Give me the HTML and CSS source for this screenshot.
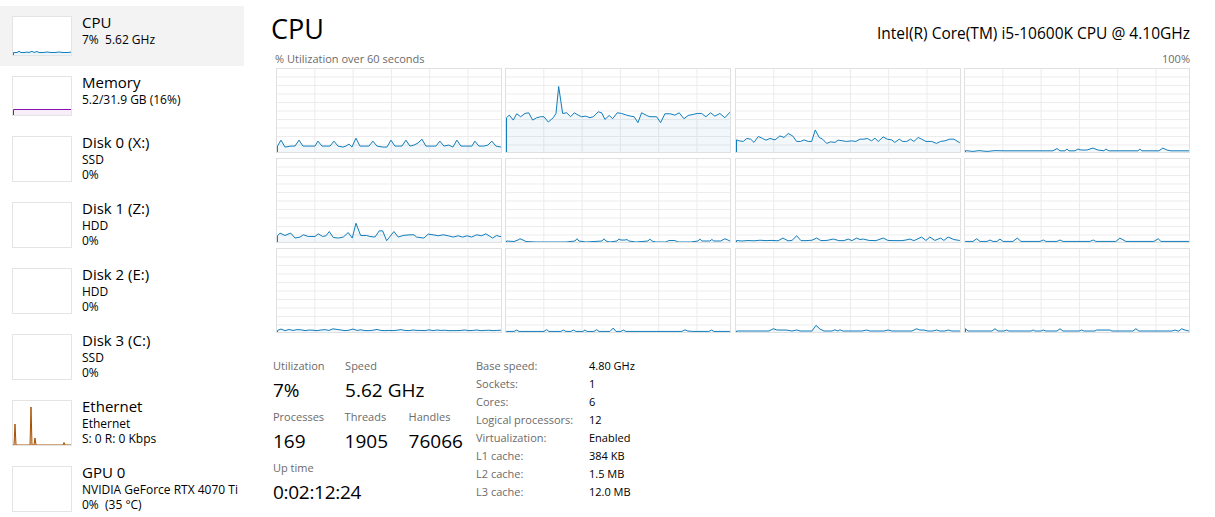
FILE: index.html
```html
<!DOCTYPE html>
<html lang="en">
<head>
<meta charset="utf-8">
<title>Task Manager - CPU</title>
<link rel="stylesheet" href="styles.css">
</head>
<body>
<div class="app">
  <nav class="sidebar">
    <div class="item selected">
      <div class="thumb">
        <svg viewBox="0 0 58 38" preserveAspectRatio="none"><polyline class="tl cpu" points="0.5,38 0.5,35.5 4,35.5 6,34.3 8,35.5 12,35.5 14,35 16,35.5 19,34.3 21,35.5 24,34.5 26,35.5 30,35.5 34,35 38,35.5 42,35.5 46,35 50,35.5 54,35.5 58,35.2 60,35.2 60,40"/></svg>
      </div>
      <div class="info"><div class="name">CPU</div><div class="sub">7%&nbsp; 5.62 GHz</div></div>
    </div>
    <div class="item">
      <div class="thumb">
        <svg viewBox="0 0 58 38" preserveAspectRatio="none"><polyline class="tl mem" points="0.5,38 0.5,32.5 58,32.5 60,32.5 60,40"/></svg>
      </div>
      <div class="info"><div class="name">Memory</div><div class="sub">5.2/31.9 GB (16%)</div></div>
    </div>
    <div class="item">
      <div class="thumb tall"></div>
      <div class="info"><div class="name">Disk 0 (X:)</div><div class="sub">SSD</div><div class="sub">0%</div></div>
    </div>
    <div class="item">
      <div class="thumb tall"></div>
      <div class="info"><div class="name">Disk 1 (Z:)</div><div class="sub">HDD</div><div class="sub">0%</div></div>
    </div>
    <div class="item">
      <div class="thumb tall"></div>
      <div class="info"><div class="name">Disk 2 (E:)</div><div class="sub">HDD</div><div class="sub">0%</div></div>
    </div>
    <div class="item">
      <div class="thumb tall"></div>
      <div class="info"><div class="name">Disk 3 (C:)</div><div class="sub">SSD</div><div class="sub">0%</div></div>
    </div>
    <div class="item">
      <div class="thumb tall">
        <svg viewBox="0 0 58 44" preserveAspectRatio="none"><polyline class="tl eth" points="0,44 1,44 2,23 3,44 17,44 18,6 19,44 21,44 22,37 23,44 50,44 51,41.5 52,44 58,44"/></svg>
      </div>
      <div class="info"><div class="name">Ethernet</div><div class="sub">Ethernet</div><div class="sub">S: 0 R: 0 Kbps</div></div>
    </div>
    <div class="item">
      <div class="thumb tall"></div>
      <div class="info"><div class="name">GPU 0</div><div class="sub">NVIDIA GeForce RTX 4070 Ti</div><div class="sub">0%&nbsp; (35 °C)</div></div>
    </div>
  </nav>

  <main class="main">
    <div class="header">
      <h1 class="title">CPU</h1>
      <div class="model">Intel(R) Core(TM) i5-10600K CPU @ 4.10GHz</div>
    </div>
    <div class="axis"><span>% Utilization over 60 seconds</span><span>100%</span></div>

    <div class="graphs">
      <div class="cell"><svg viewBox="0 0 224 84" preserveAspectRatio="none"><polyline class="gl" points="0.5,84 0.5,78 4,72 8,79 14,78 18,78 22,72 26,78 32,78 38,78 41,73 45,78 50,78 53,78 57,73 61,78 66,79 69,78 72,76 75,79 79,70 83,78 88,78 92,78 96,73 100,78 106,79 110,79 114,72 118,78 122,78 125,78 129,72 133,78 137,77 141,75 145,71 149,78 155,78 159,78 163,73 167,78 172,77 176,79 180,72 184,78 190,78 195,78 198,73 202,78 207,78 211,77 215,73 219,78 224,79 226,79 226,86"/></svg></div>
      <div class="cell"><svg viewBox="0 0 224 84" preserveAspectRatio="none"><polyline class="gl" points="0.5,84 0.5,49.3 3.3,46.7 7.3,51.7 10.7,45.3 14.7,48.3 19,45 22.7,44.3 26.7,51.7 30.7,49.3 34.7,48.3 38,48.3 42.3,53.7 47.3,49.3 50,45 52.7,17.7 56.7,45 60.7,44.3 64.7,48.3 68.3,44.3 72.3,46.7 75.7,48.3 79.7,47.7 84,49.3 87.3,48.3 92.3,43.3 95.7,44.3 99,51 103.3,47 106.7,50.3 111.3,44.3 115.7,45 120.7,46.7 124.7,47.7 128.3,48.3 132,54.3 135.7,44.3 140.7,47 144,48.3 150.7,48.3 154.7,54.3 159,45.3 164,45.3 169,46.7 173.3,44.3 178,50.3 182.3,47 187.3,46 191.3,45 195.7,45 200,48.3 204.7,44.3 209,47.7 214,45 219,49.3 224,43.7 226,43.7 226,86"/></svg></div>
      <div class="cell"><svg viewBox="0 0 224 84" preserveAspectRatio="none"><polyline class="gl" points="0.5,84 0.5,71.7 3.3,72.7 7.3,73.3 10.7,70.3 14.7,71 18,74.3 22.3,68.3 26.7,70.3 30,72 34,70.3 39,71.7 44,67.7 48,69.3 52.3,65.3 56.7,67.7 60.7,73.3 64.7,73.3 68,71.7 72.3,73.3 75.7,73.3 79.3,61.7 83.3,69.3 86.7,71 90.7,75.3 94.7,73.7 99,74.3 102.3,72 106.7,72.7 110.7,73.3 115.7,72.7 120,73.3 124,71 128,71 131.3,70.3 135.7,72.7 139,70 142.3,73.3 147.3,68.7 151.3,71 155.7,71.7 159,74.3 163.3,71 166.7,73.3 170.7,73.3 174.7,71 178,73.3 182.3,69.3 185.7,71 190,73.3 195.7,73.3 200.7,75.3 204.7,73.3 209,72.7 214,71 218,71 223.3,74.3 226,74.3 226,86"/></svg></div>
      <div class="cell"><svg viewBox="0 0 224 84" preserveAspectRatio="none"><polyline class="gl" points="0.5,84 0.5,82.6 8,83.4 14,82.6 22,83.4 30,82.6 40,82.8 60,82.8 88,82.8 92,80.5 95,82.8 100,82.8 102,81 104,82.8 110,82.8 113,81 116,82 122,82 128,80 133,82 139,82.8 141,81 144,82.8 173,82.8 175,81 177,82.8 194,82.8 198,80 202,82 206,82.8 224,82.8 226,82.8 226,86"/></svg></div>

      <div class="cell"><svg viewBox="0 0 224 84" preserveAspectRatio="none"><polyline class="gl" points="0.5,84 0.5,77.7 3,75 8,77.4 13.7,75 18,80 23,79 26.3,76.7 31.3,78.4 38,78.4 41.3,75.7 45.7,78.4 49,77.7 52.3,73.4 56.3,79.4 61.3,80 66.3,79 71.3,74.4 75.3,80 79,65 83.7,77.4 89.7,77.4 93,78.4 98,79 102.3,72.7 105.7,72.7 109.7,82.7 117,73.4 121.3,79 126.3,77.4 133,76.7 137,76.7 139.7,79 147,80 151.3,76 156.3,76.7 161.3,77.7 166.3,76.7 171.3,77.7 176.3,79 181.3,77.7 185.7,79 190.3,77.7 194.7,79 199.7,76.7 204.7,77.7 209,75.7 215.7,80 219.7,77.4 223,78.4 226,78.4 226,86"/></svg></div>
      <div class="cell"><svg viewBox="0 0 224 84" preserveAspectRatio="none"><polyline class="gl" points="0.5,84 0.5,83 8,83.5 12,82 14,80.7 17,82 20,83.5 30,84 45,84 60,84 69,83 71,80.7 73,83 80,84 96,83 98,80.7 100,83 104,84 111,83 113,81 115,82 119,82 121,81.5 123,83 130,84 142,83 144,81 146,83 150,84 160,84 163,82.5 169,82.5 172,84 185,84 192,83 194,81 196,83 204,83 206,81.5 208,83 215,83 219,80.7 222,82 224,83 226,83 226,86"/></svg></div>
      <div class="cell"><svg viewBox="0 0 224 84" preserveAspectRatio="none"><polyline class="gl" points="0.5,84 0.5,82.5 6,83 12,82.5 18,82.8 24,82.2 30,82.6 36,82.4 42,82.8 47,80 52,82.8 56,82.4 60.7,77.7 65,82.6 70,82.6 76,82.2 80.7,80 85,82.6 91,82.4 97.3,81 103,82.6 108,82.6 112.3,81 116,82.6 120.7,80 124,81.5 127.3,81 133,82.4 140,82.6 147.3,80 152,82.4 158,82.6 166,82.6 170,82 174,81 178,82.6 185.7,79 190,82.4 194,79 199,82.4 204.7,80 208,82.4 212.3,79 218,81.5 223.3,82.4 226,82.4 226,86"/></svg></div>
      <div class="cell"><svg viewBox="0 0 224 84" preserveAspectRatio="none"><polyline class="gl" points="0.5,84 0.5,83.4 8,83.4 11.7,80.7 15,83.4 22,83.4 25,82 28,83.4 32,83.4 35,81 38,83.4 48,83.4 52.3,80 56,83.4 75,83.4 78.3,82 81,83.4 92,83.4 95,82 98,83.4 125,83.4 128.3,82 131,83.4 151,83.4 155,80 158,81.7 161,83.4 189,83.4 193.3,80.7 196,83.4 224,83.4 226,83.4 226,86"/></svg></div>

      <div class="cell"><svg viewBox="0 0 224 84" preserveAspectRatio="none"><polyline class="gl" points="0.5,84 0.5,82.4 4,81 8,82.6 12,81.5 16,82.4 20,81.6 24,81.8 28,82.6 32,82 36,82.2 40,82.6 44,82 48,81.6 52,82.4 56,80.8 60,81.4 64,82 68,82.6 72,82.2 76,81 80,82.4 84,81.8 88,82.6 92,82.6 96,82.2 100,81.4 104,82.4 108,82.6 112,82.4 116,82.6 120,82.2 124,81.6 128,82.4 132,82.6 136,82 140,82.4 144,82.4 148,82.6 152,81.8 156,82.6 160,82 164,82.4 168,82.2 172,82.6 176,82.6 180,82.6 184,82.4 188,82 192,82.6 196,82.4 200,82 204,82.6 208,82.4 212,82.2 216,82.6 220,82.4 224,82.2 226,82.2 226,86"/></svg></div>
      <div class="cell"><svg viewBox="0 0 224 84" preserveAspectRatio="none"><polyline class="gl" points="0.5,84 0.5,83.4 8,83.4 10.7,82 13,83.4 38,83.4 40.7,81.6 43,83.4 55,83.4 57.3,82 60,83.4 65,83.4 67.3,82 70,83.4 77,83.4 79,82 81,83.4 88,83.4 90.7,81.6 93,83.4 104,83.4 107.3,80 110,83.4 115,83.4 117.3,82 120,83.4 176,83.4 179,81.8 182,83 187,83.4 203,83.4 205.7,82 208,83.4 224,83.4 226,83.4 226,86"/></svg></div>
      <div class="cell"><svg viewBox="0 0 224 84" preserveAspectRatio="none"><polyline class="gl" points="0.5,84 0.5,83 33,83 37.3,80.7 41,82 50,82 56,83 60.7,82 64,83 76,83 80,77.3 84,81 88,83 96,83 99,81.8 102,83 104,81.8 107,83 126,83 130.7,82 134,83 148,83 152.3,82 156,83 176,83 180.7,80.7 184,82 188,82 192,83 197,83 200.7,82 204,83 209,83 212.3,82 216,83 224,83 226,83 226,86"/></svg></div>
      <div class="cell"><svg viewBox="0 0 224 84" preserveAspectRatio="none"><polyline class="gl" points="0.5,84 0.5,80.7 3,83 27,83 30,80.7 33,83 39,83 41.7,82 44,83 66,83 68.3,82 70,83 76,83 78.3,82 81,83 92,83 95,80.7 98,83 114,83 116.7,82 119,83 130,83 131.7,82 145,82 147,83 168,83 171,80.7 174,83 207,83 210,82 213,83 214,83 216.7,80.7 220,82 224,83 226,83 226,86"/></svg></div>
    </div>

    <div class="stats">
      <div class="dyn">
        <div class="row">
          <div class="stat"><div class="label">Utilization</div><div class="value">7%</div></div>
          <div class="stat"><div class="label">Speed</div><div class="value">5.62 GHz</div></div>
        </div>
        <div class="row">
          <div class="stat"><div class="label">Processes</div><div class="value">169</div></div>
          <div class="stat"><div class="label">Threads</div><div class="value">1905</div></div>
          <div class="stat"><div class="label">Handles</div><div class="value">76066</div></div>
        </div>
        <div class="row">
          <div class="stat"><div class="label">Up time</div><div class="value uptime">0:02:12:24</div></div>
        </div>
      </div>
      <div class="specs">
        <span class="k">Base speed:</span><span class="v">4.80 GHz</span>
        <span class="k">Sockets:</span><span class="v">1</span>
        <span class="k">Cores:</span><span class="v">6</span>
        <span class="k">Logical processors:</span><span class="v">12</span>
        <span class="k">Virtualization:</span><span class="v">Enabled</span>
        <span class="k">L1 cache:</span><span class="v">384 KB</span>
        <span class="k">L2 cache:</span><span class="v">1.5 MB</span>
        <span class="k">L3 cache:</span><span class="v">12.0 MB</span>
      </div>
    </div>
  </main>
</div>
</body>
</html>
```

FILE: styles.css
```css
* {
  box-sizing: border-box;
  margin: 0;
  padding: 0;
}

html,
body {
  height: 100%;
  overflow: hidden;
  background: #ffffff;
}

body {
  font-family: "Open Sans", "Noto Sans", sans-serif;
  color: #000000;
}

.app {
  display: flex;
  height: 100%;
}

/* ---------- sidebar ---------- */
.sidebar {
  width: 244px;
  flex-shrink: 0;
  padding-top: 6px;
}

.item {
  display: flex;
  align-items: flex-start;
  gap: 10px;
  padding: 10px 0 10px 12px;
}

.item.selected {
  background: #f3f3f3;
}

.thumb {
  width: 60px;
  height: 40px;
  flex-shrink: 0;
  border: 1px solid #e4e4e4;
  background: #ffffff;
}

.thumb.tall {
  height: 46px;
}

.thumb svg {
  display: block;
  width: 100%;
  height: 100%;
  overflow: hidden;
}

.tl {
  stroke-width: 1;
  vector-effect: non-scaling-stroke;
  stroke-linejoin: round;
}

.tl.cpu {
  stroke: #117dbb;
  fill: rgba(17, 125, 187, 0.08);
}

.tl.mem {
  stroke: #8b12ae;
  fill: rgba(139, 18, 174, 0.07);
}

.tl.eth {
  stroke: #a74f01;
  fill: rgba(167, 79, 1, 0.25);
}

.info {
  margin-top: -4px;
  white-space: nowrap;
}

.name {
  font-size: 15px;
  line-height: 20px;
}

.sub {
  font-size: 12px;
  line-height: 15px;
}

/* ---------- main ---------- */
.main {
  flex: 1;
  min-width: 0;
  padding: 12px 25px 0 29px;
}

.header {
  display: flex;
  justify-content: space-between;
  align-items: baseline;
  height: 34px;
}

.title {
  font-size: 27px;
  font-weight: 400;
  line-height: 34px;
  margin-left: -2px;
}

.model {
  font-size: 15.5px;
  line-height: 20px;
}

.axis {
  display: flex;
  justify-content: space-between;
  margin: 5px 0 0 2px;
  font-size: 11px;
  line-height: 15px;
  color: #6b6b6b;
}

.graphs {
  display: grid;
  grid-template-columns: repeat(4, 1fr);
  grid-auto-rows: 85px;
  gap: 5px 3.5px;
  margin: 2px 0 0 3px;
}

.cell {
  border: 1px solid #e0e0e0;
  background-color: #ffffff;
  background-image:
    linear-gradient(to right, #ebebeb 1px, transparent 1px),
    linear-gradient(to bottom, #ebebeb 1px, transparent 1px);
  background-size: 38.3px 100%, 100% 10%;
  background-origin: border-box;
  background-position: 0 0, 0 0;
}

.cell svg {
  display: block;
  width: 100%;
  height: 100%;
  overflow: hidden;
}

.gl {
  fill: rgba(17, 125, 187, 0.06);
  stroke: #117dbb;
  stroke-width: 1;
  vector-effect: non-scaling-stroke;
  stroke-linejoin: round;
}

/* ---------- stats ---------- */
.stats {
  display: flex;
  margin-top: 25px;
}

.dyn {
  width: 203px;
  flex-shrink: 0;
}

.row {
  display: flex;
  gap: 20.5px;
  margin-bottom: 7px;
}

.label {
  font-size: 11px;
  line-height: 15px;
  color: #6b6b6b;
  margin-bottom: 5px;
}

.value {
  font-size: 19px;
  line-height: 24px;
  white-space: nowrap;
}

.uptime {
  letter-spacing: -0.3px;
}

.specs {
  display: grid;
  grid-template-columns: 113px auto;
  align-content: start;
  margin-top: -1.5px;
  font-size: 11px;
  line-height: 18px;
}

.specs .k {
  color: #6b6b6b;
}

.specs .v {
  color: #000000;
}
```
